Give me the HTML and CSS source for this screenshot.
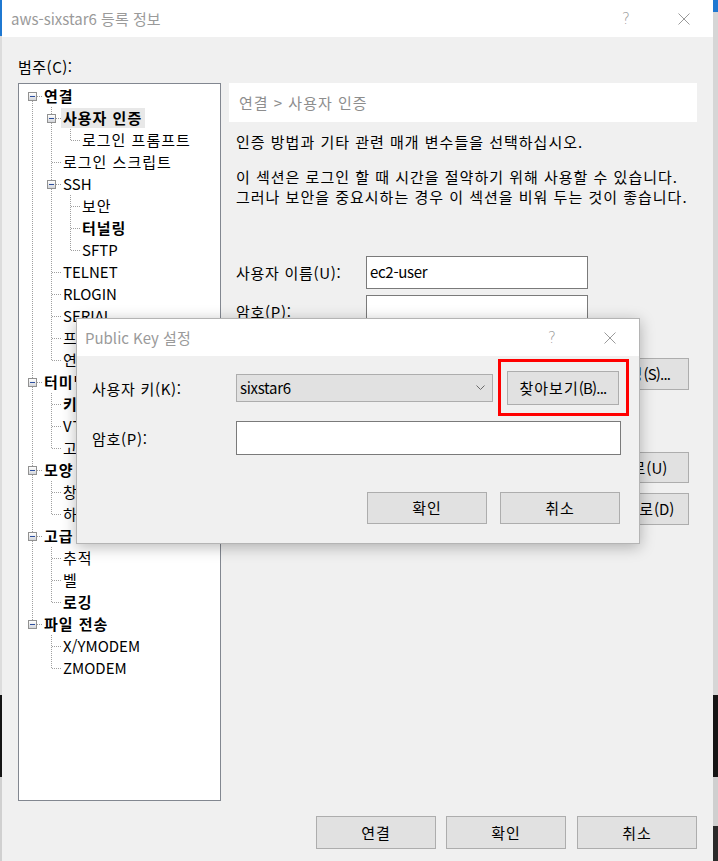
FILE: index.html
```html
<!DOCTYPE html>
<html lang="ko">
<head>
<meta charset="utf-8">
<title>aws-sixstar6 등록 정보</title>
<link rel="stylesheet" href="styles.css">
</head>
<body>
<div class="edge edge-left"></div>
<div class="window">
  <div class="titlebar">
    <span class="title">aws-sixstar6 등록 정보</span>
    <span class="cap help">?</span>
    <span class="cap close"><svg width="12" height="12" viewBox="0 0 12 12"><path d="M0.5 0.5 L11.5 11.5 M11.5 0.5 L0.5 11.5" stroke="#9a9a9a" stroke-width="1" fill="none"/></svg></span>
  </div>
  <div class="content">
    <div class="cat-label">범주(C):</div>
    <div class="main">
      <div class="tree">
        <div class="row"><span class="g box first"><i class="pm"></i></span><span class="lbl b">연결</span></div>
        <div class="row"><span class="g pipe"></span><span class="g box mid"><i class="pm"></i></span><span class="lbl b sel">사용자 인증</span></div>
        <div class="row"><span class="g pipe"></span><span class="g pipe"></span><span class="g ell"></span><span class="lbl">로그인 프롬프트</span></div>
        <div class="row"><span class="g pipe"></span><span class="g tee"></span><span class="lbl">로그인 스크립트</span></div>
        <div class="row"><span class="g pipe"></span><span class="g box mid"><i class="pm"></i></span><span class="lbl en">SSH</span></div>
        <div class="row"><span class="g pipe"></span><span class="g pipe"></span><span class="g tee"></span><span class="lbl">보안</span></div>
        <div class="row"><span class="g pipe"></span><span class="g pipe"></span><span class="g tee"></span><span class="lbl b">터널링</span></div>
        <div class="row"><span class="g pipe"></span><span class="g pipe"></span><span class="g ell"></span><span class="lbl en">SFTP</span></div>
        <div class="row"><span class="g pipe"></span><span class="g tee"></span><span class="lbl en">TELNET</span></div>
        <div class="row"><span class="g pipe"></span><span class="g tee"></span><span class="lbl en">RLOGIN</span></div>
        <div class="row"><span class="g pipe"></span><span class="g tee"></span><span class="lbl en">SERIAL</span></div>
        <div class="row"><span class="g pipe"></span><span class="g tee"></span><span class="lbl">프록시</span></div>
        <div class="row"><span class="g pipe"></span><span class="g ell"></span><span class="lbl">연결 유지</span></div>
        <div class="row"><span class="g box mid"><i class="pm"></i></span><span class="lbl b">터미널</span></div>
        <div class="row"><span class="g pipe"></span><span class="g tee"></span><span class="lbl b">키보드</span></div>
        <div class="row"><span class="g pipe"></span><span class="g tee"></span><span class="lbl">VT 모드</span></div>
        <div class="row"><span class="g pipe"></span><span class="g ell"></span><span class="lbl">고급</span></div>
        <div class="row"><span class="g box mid"><i class="pm"></i></span><span class="lbl b">모양</span></div>
        <div class="row"><span class="g pipe"></span><span class="g tee"></span><span class="lbl">창</span></div>
        <div class="row"><span class="g pipe"></span><span class="g ell"></span><span class="lbl">하이라이트</span></div>
        <div class="row"><span class="g box mid"><i class="pm"></i></span><span class="lbl b">고급</span></div>
        <div class="row"><span class="g pipe"></span><span class="g tee"></span><span class="lbl">추적</span></div>
        <div class="row"><span class="g pipe"></span><span class="g tee"></span><span class="lbl">벨</span></div>
        <div class="row"><span class="g pipe"></span><span class="g ell"></span><span class="lbl b">로깅</span></div>
        <div class="row"><span class="g box last"><i class="pm"></i></span><span class="lbl b">파일 전송</span></div>
        <div class="row"><span class="g"></span><span class="g tee"></span><span class="lbl en">X/YMODEM</span></div>
        <div class="row"><span class="g"></span><span class="g ell"></span><span class="lbl en">ZMODEM</span></div>
      </div>
      <div class="panel">
        <div class="panel-head">연결 &gt; 사용자 인증</div>
        <p class="desc first">인증 방법과 기타 관련 매개 변수들을 선택하십시오.</p>
        <p class="desc">이 섹션은 로그인 할 때 시간을 절약하기 위해 사용할 수 있습니다.<br>그러나 보안을 중요시하는 경우 이 섹션을 비워 두는 것이 좋습니다.</p>
        <div class="field first-field"><span class="flabel">사용자 이름(U):</span><span class="input">ec2-user</span></div>
        <div class="field"><span class="flabel">암호(P):</span><span class="input"></span></div>
        <div class="methods">
          <div class="method-list">
            <div class="mlabel">방법(M):</div>
            <div class="mbox"></div>
          </div>
          <div class="mbuttons">
            <button class="btn mb1"><span class="ko">설정</span><span class="tight">(S)...</span></button>
            <button class="btn mb2"><span class="ko">위로</span>(U)</button>
            <button class="btn mb3"><span class="ko">아래로</span>(D)</button>
          </div>
        </div>
      </div>
    </div>
    <div class="footer">
      <button class="btn fbtn"><span class="ko">연결</span></button>
      <button class="btn fbtn"><span class="ko">확인</span></button>
      <button class="btn fbtn last"><span class="ko">취소</span></button>
    </div>
  </div>
</div>
<div class="edge edge-right"></div>

<div class="dialog">
  <div class="titlebar dlg-title">
    <span class="title">Public Key 설정</span>
    <span class="cap help">?</span>
    <span class="cap close"><svg width="12" height="12" viewBox="0 0 12 12"><path d="M0.5 0.5 L11.5 11.5 M11.5 0.5 L0.5 11.5" stroke="#9a9a9a" stroke-width="1" fill="none"/></svg></span>
  </div>
  <div class="dlg-body">
    <div class="drow">
      <span class="dlabel">사용자 키(K):</span>
      <span class="combo"><span class="combo-text">sixstar6</span><svg width="9" height="6" viewBox="0 0 9 6"><path d="M0.5 0.5 L4.5 4.5 L8.5 0.5" stroke="#6a6a6a" stroke-width="1" fill="none"/></svg></span>
      <button class="btn browse"><span class="ko">찾아보기</span><span class="tight">(B)...</span></button>
    </div>
    <div class="drow second">
      <span class="dlabel">암호(P):</span>
      <span class="input dinput"></span>
    </div>
    <div class="dfooter">
      <button class="btn dbtn"><span class="ko">확인</span></button>
      <button class="btn dbtn"><span class="ko">취소</span></button>
    </div>
  </div>
  <div class="highlight"></div>
</div>
</body>
</html>
```
FILE: styles.css
```css
* { box-sizing: border-box; }
html, body { margin: 0; padding: 0; }
body {
  width: 718px;
  height: 861px;
  overflow: hidden;
  display: flex;
  background: #c8c8c8;
  font-family: "Noto Sans CJK KR", "Malgun Gothic", sans-serif;
  font-size: 15px;
  color: #000;
  position: relative;
}
.edge { flex: none; height: 861px; }
.edge-left {
  width: 2px;
  background: linear-gradient(#1f78d1 0 36px, #dcdcdc 36px 695px, #151515 695px 777px, #d0d0d0 777px);
}
.edge-right {
  width: 5px;
  background: linear-gradient(#1f78d1 0 12px, #d6d6d6 12px 695px, #151515 695px 777px, #cfcfcf 777px 826px, #2a2a2a 826px);
}
.window {
  width: 711px;
  height: 861px;
  flex: none;
  background: #f0f0f0;
  display: flex;
  flex-direction: column;
}
.titlebar {
  height: 37px;
  background: #fff;
  display: flex;
  align-items: center;
  flex: none;
}
.title {
  flex: 1;
  padding-left: 9px;
  color: #9a9a9a;
  line-height: 20px;
  white-space: nowrap;
}
.cap {
  width: 58px;
  height: 100%;
  display: flex;
  align-items: center;
  justify-content: center;
  color: #9a9a9a;
  font-family: "DejaVu Sans", sans-serif;
  font-size: 15px;
  font-weight: 200;
}
.content {
  padding: 0 16px;
  display: flex;
  flex-direction: column;
}
.cat-label {
  padding-top: 20px;
  padding-bottom: 6px;
  line-height: 20px;
  letter-spacing: 0.5px;
}
.main {
  display: flex;
  gap: 8px;
  height: 718px;
}
.tree {
  width: 203px;
  height: 718px;
  flex: none;
  background: #fff;
  border: 1px solid #828790;
  padding: 1px 0 0 4px;
  overflow: hidden;
}
.row {
  height: 22px;
  display: flex;
  align-items: center;
}
.g {
  --dv: repeating-linear-gradient(to bottom, #a0a0a0 0 1px, transparent 1px 2px);
  --dh: repeating-linear-gradient(to right, #a0a0a0 0 1px, transparent 1px 2px);
  width: 19px;
  height: 22px;
  flex: none;
  display: flex;
  align-items: flex-start;
}
.pipe { background: var(--dv) 9px 0 / 1px 22px no-repeat; }
.tee { background: var(--dh) 10px 11px / 9px 1px no-repeat, var(--dv) 9px 0 / 1px 22px no-repeat; }
.ell { background: var(--dh) 10px 11px / 9px 1px no-repeat, var(--dv) 9px 0 / 1px 12px no-repeat; }
.box.first { background: var(--dh) 10px 11px / 9px 1px no-repeat, var(--dv) 9px 12px / 1px 10px no-repeat; }
.box.mid { background: var(--dh) 10px 11px / 9px 1px no-repeat, var(--dv) 9px 0 / 1px 22px no-repeat; }
.box.last { background: var(--dh) 10px 11px / 9px 1px no-repeat, var(--dv) 9px 0 / 1px 8px no-repeat; }
.pm {
  display: block;
  width: 9px;
  height: 9px;
  margin: 7px 0 0 5px;
  border: 1px solid #919191;
  background:
    linear-gradient(#2d4f9e, #2d4f9e) center / 5px 1px no-repeat,
    linear-gradient(#ffffff, #d3d5d9);
}
.lbl {
  height: 20px;
  line-height: 20px;
  padding: 0 3px 0 2px;
  white-space: nowrap;
  letter-spacing: 1px;
}
.lbl.en { letter-spacing: 0; }
.lbl.b { font-weight: 700; }
.lbl.sel { background: #e8e8e8; }

.panel {
  width: 468px;
  flex: none;
  display: flex;
  flex-direction: column;
}
.panel-head {
  height: 39px;
  background: #fff;
  padding-left: 10px;
  line-height: 39px;
  color: #8d8d8d;
  letter-spacing: 1px;
  flex: none;
}
.desc {
  margin: 15px 0 0;
  padding-left: 7px;
  line-height: 20px;
  letter-spacing: 1px;
  white-space: nowrap;
}
.desc.first { margin-top: 10px; }
.field {
  display: flex;
  align-items: center;
  padding-left: 7px;
  margin-top: 6px;
}
.field.first-field { margin-top: 49px; }
.flabel { width: 130px; flex: none; letter-spacing: 0.7px; white-space: nowrap; }
.input {
  width: 222px;
  height: 33px;
  background: #fff;
  border: 1px solid #7a7a7a;
  padding-left: 3px;
  line-height: 29px;
  display: block;
  letter-spacing: -0.3px;
}
.methods {
  display: flex;
  margin-top: 30px;
  padding: 0 8px 0 7px;
  gap: 10px;
}
.method-list { flex: 1; }
.mlabel { line-height: 20px; }
.mbox { height: 140px; background: #fff; border: 1px solid #7a7a7a; margin-top: 6px; }
.mbuttons {
  width: 94px;
  flex: none;
  display: flex;
  flex-direction: column;
}
.btn {
  font-family: "Noto Sans CJK KR", "Malgun Gothic", sans-serif;
  font-size: 15px;
  color: #000;
  background: #e1e1e1;
  border: 1px solid #adadad;
  padding: 0;
  margin: 0;
  line-height: 20px;
  white-space: nowrap;
}
.ko { letter-spacing: 1px; }
.tight { letter-spacing: -0.8px; }
.mb1 { height: 32px; }
.mb2 { height: 31px; margin-top: 62px; }
.mb3 { height: 32px; margin-top: 10px; }
.footer {
  margin-top: 15px;
  display: flex;
  justify-content: flex-end;
  gap: 10px;
}
.fbtn { width: 120px; height: 33px; }
.fbtn.last { margin-left: 1px; }

.dialog {
  position: absolute;
  left: 76px;
  top: 318px;
  width: 564px;
  height: 226px;
  background: #f0f0f0;
  border: 1px solid #b4b4b4;
  box-shadow: 0 3px 14px rgba(0, 0, 0, 0.28);
  display: flex;
  flex-direction: column;
}
.dlg-title { height: 37px; }
.dlg-title .title { padding-left: 8px; }
.dlg-body {
  padding: 15px 18px 0 15px;
  display: flex;
  flex-direction: column;
}
.drow {
  display: flex;
  align-items: center;
  height: 34px;
}
.drow.second { margin-top: 16px; }
.dlabel { width: 144px; flex: none; letter-spacing: 0.7px; white-space: nowrap; }
.combo {
  width: 257px;
  height: 28px;
  background: #e1e1e1;
  border: 1px solid #adadad;
  display: flex;
  align-items: center;
  padding: 0 7px 0 3px;
}
.combo-text { flex: 1; line-height: 20px; letter-spacing: -0.3px; }
.browse { width: 112px; height: 34px; margin-left: 14px; }
.dinput { width: 385px; height: 34px; }
.dfooter {
  margin-top: 37px;
  display: flex;
  justify-content: flex-end;
  gap: 13px;
  padding-right: 1px;
}
.dbtn { width: 120px; height: 32px; }
.highlight {
  position: absolute;
  left: 421px;
  top: 40px;
  width: 131px;
  height: 57px;
  border: 3px solid #ff0000;
}
```
